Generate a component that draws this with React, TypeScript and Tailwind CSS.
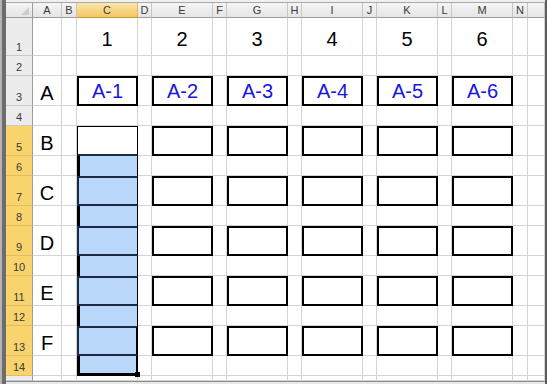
import React from 'react';

// sheet layout: column letters across, row numbers down
const COLS = ['A', 'B', 'C', 'D', 'E', 'F', 'G', 'H', 'I', 'J', 'K', 'L', 'M', 'N', ''];
const ROWS = [1, 2, 3, 4, 5, 6, 7, 8, 9, 10, 11, 12, 13, 14, 15];
const LABELS = ['A', 'B', 'C', 'D', 'E', 'F'];

const big = "font-['Liberation_Sans',Arial,sans-serif] text-[20px] leading-[23px]";
const small = "font-['Liberation_Sans',Arial,sans-serif] text-[11px] leading-[13px] text-[#3a3a3a]";

const isBoxRow = (r: number) => r >= 3 && r <= 13 && r % 2 === 1;
const isBoxCol = (c: number) => c >= 2 && c <= 12 && c % 2 === 0;
const inSelection = (r: number, c: number) => c === 2 && r >= 5 && r <= 14;

function cellClass(r: number, c: number) {
  if (inSelection(r, c)) {
    if (r === 5) {
      return 'bg-white border-t border-l border-r border-black border-b-2 border-b-[#1a2b45]';
    }
    if (r === 14) {
      return 'relative bg-[#b9d8f9] border-l-[3px] border-r-2 border-b-[3px] border-black';
    }
    if (r === 13) {
      return 'bg-[#b9d8f9] border-t-2 border-b-2 border-[#1a2b45] border-l-2 border-r-2 border-r-black';
    }
    if (isBoxRow(r)) {
      return 'bg-[#b9d8f9] border-t-2 border-b-2 border-l-2 border-[#1a2b45] border-r border-r-black';
    }
    return 'bg-[#b9d8f9] border-l-[3px] border-l-black border-r border-r-black';
  }
  if (isBoxRow(r) && isBoxCol(c)) return 'bg-white border-2 border-black';
  return 'bg-white border-r border-b border-[#d4d4d4]';
}

function CellContent({ r, c }: { r: number; c: number }) {
  if (r === 1 && isBoxCol(c)) {
    return <span className={`${big} text-black pb-[4px]`}>{(c - 2) / 2 + 1}</span>;
  }
  if (c === 0 && isBoxRow(r)) {
    return <span className={`${big} text-black`}>{LABELS[(r - 3) / 2]}</span>;
  }
  if (r === 3 && isBoxCol(c)) {
    return <span className={`${big} text-[#1616e0] pb-px`}>{`A-${(c - 2) / 2 + 1}`}</span>;
  }
  return null;
}

function RowHeader({ r }: { r: number }) {
  const selected = r >= 5 && r <= 14;
  return (
    <div
      className={`flex items-end justify-center pb-px border-r border-r-[#9c9c9c] border-b ${
        selected ? 'bg-[#f9d46c] border-b-[#e0bd6a]' : 'bg-[#ececec] border-b-[#c9c9c9]'
      }`}
    >
      {r <= 14 && <span className={small}>{r}</span>}
    </div>
  );
}

export default function App() {
  return (
    <div className="flex w-[547px] h-[384px] overflow-hidden bg-white">
      {/* window frame, left */}
      <div className="w-[6px] h-full bg-[#6c6c6c] border-l-2 border-[#b4b4b4]" />

      <div className="flex flex-col w-[539px]">
        <div className="h-[3px] bg-[#f0f0f0] border-b border-[#a9a9a9]" />

        <div className="grid grid-cols-[27px_29px_15px_61px_14px_61px_14px_61px_14px_61px_14px_61px_14px_61px_15px_17px] grid-rows-[15px_38px_20px_30px_20px_30px_20px_30px_20px_30px_20px_30px_20px_30px_20px_5px]">
          {/* select-all corner */}
          <div className="relative bg-gradient-to-b from-[#f4f4f4] to-[#e4e4e4] border-r border-b border-[#9c9c9c]">
            <svg className="absolute right-[3px] bottom-[2px]" width="8" height="8" viewBox="0 0 8 8">
              <path d="M8 0 L8 8 L0 8 Z" fill="#cdcdcd" />
            </svg>
          </div>

          {COLS.map((col, i) => (
            <div
              key={`h${i}`}
              className={`flex items-center justify-center border-r border-b ${
                i === 2
                  ? 'bg-gradient-to-b from-[#fbe6ad] to-[#f4c65e] border-r-[#d9b25a] border-b-[#c99a3a]'
                  : 'bg-gradient-to-b from-[#f5f5f5] to-[#e5e5e5] border-r-[#c5c5c5] border-b-[#9c9c9c]'
              }`}
            >
              <span className={small}>{col}</span>
            </div>
          ))}

          {ROWS.map((r) => (
            <React.Fragment key={r}>
              <RowHeader r={r} />
              {COLS.map((_, c) => (
                <div key={c} className={`flex items-end justify-center ${cellClass(r, c)}`}>
                  <CellContent r={r} c={c} />
                  {r === 14 && c === 2 && (
                    <div className="absolute -right-[4px] -bottom-[4px] w-[5px] h-[5px] bg-black" />
                  )}
                </div>
              ))}
            </React.Fragment>
          ))}
        </div>

        <div className="flex-1 bg-[#e9e9e9] border-t border-[#8a8a8a]" />
      </div>

      {/* window frame, right */}
      <div className="w-[2px] h-full bg-[#5e5e5e]" />
    </div>
  );
}
